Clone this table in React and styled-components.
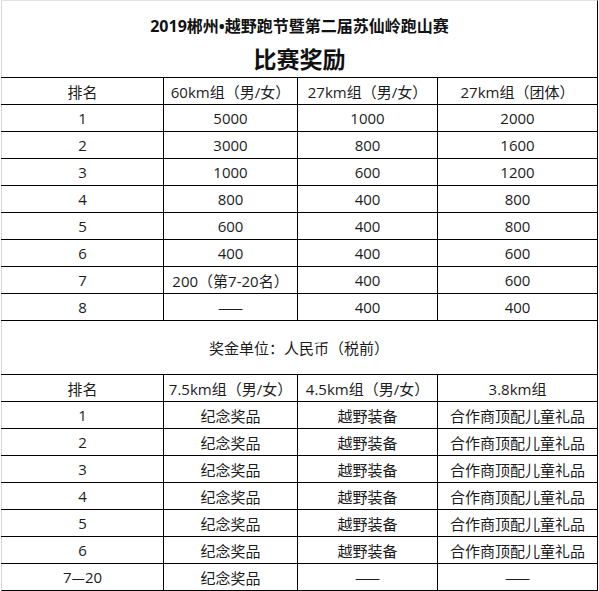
import styled, { createGlobalStyle } from "styled-components"

const GlobalStyle = createGlobalStyle`
body {
    margin: 0;
    background: #fff;
    font-family: "Open Sans", "Noto Sans CJK SC", sans-serif;
    color: #1c1c1c;
}
`

const COLS = "161px 134px 140px 160px"

const Dash = styled.span`
font-family: "Noto Sans CJK SC", sans-serif;
`

const cashPrizes = [
    ["1", "5000", "1000", "2000"],
    ["2", "3000", "800", "1600"],
    ["3", "1000", "600", "1200"],
    ["4", "800", "400", "800"],
    ["5", "600", "400", "800"],
    ["6", "400", "400", "600"],
    ["7", "200（第7-20名）", "400", "600"],
    ["8", <Dash>——</Dash>, "400", "400"],
]

const giftPrizes = [
    ["1", "纪念奖品", "越野装备", "合作商顶配儿童礼品"],
    ["2", "纪念奖品", "越野装备", "合作商顶配儿童礼品"],
    ["3", "纪念奖品", "越野装备", "合作商顶配儿童礼品"],
    ["4", "纪念奖品", "越野装备", "合作商顶配儿童礼品"],
    ["5", "纪念奖品", "越野装备", "合作商顶配儿童礼品"],
    ["6", "纪念奖品", "越野装备", "合作商顶配儿童礼品"],
    [<>7<Dash>—</Dash>20</>, "纪念奖品", <Dash>——</Dash>, <Dash>——</Dash>],
]

const PrizeRows = ({ head, rows }) => (
    <>
        <Row>
            {head.map((h, i) => <Cell key={i}>{h}</Cell>)}
        </Row>
        {rows.map((r, n) => (
            <Row key={n}>
                {r.map((c, i) => <Cell key={i}>{c}</Cell>)}
            </Row>
        ))}
    </>
)

export default function App() {
    return (
        <>
            <GlobalStyle />
            <Page>
                <Sheet>
                    <Header>
                        <Title>2019郴州•越野跑节暨第二届苏仙岭跑山赛</Title>
                        <BigTitle>比赛奖励</BigTitle>
                    </Header>
                    <PrizeRows
                        head={["排名", "60km组（男/女）", "27km组（男/女）", "27km组（团体）"]}
                        rows={cashPrizes}
                    />
                    <Note>奖金单位：人民币（税前）</Note>
                    <PrizeRows
                        head={["排名", "7.5km组（男/女）", "4.5km组（男/女）", "3.8km组"]}
                        rows={giftPrizes}
                    />
                </Sheet>
            </Page>
        </>
    )
}

const Page = styled.div`
padding-left: 1px;
width: 599px;
height: 591px;
box-sizing: border-box;
overflow: hidden;
`
const Sheet = styled.div`
width: 597px;
box-sizing: border-box;
border-top: 1px solid #e2e2e2;
border-left: 1px solid #d6d6d6;
border-right: 1px solid #000;
border-bottom: 1px solid #000;
`
const Header = styled.div`
height: 76px;
display: flex;
flex-direction: column;
align-items: center;
`
const Title = styled.div`
margin-top: 13px;
font-size: 16px;
line-height: 24px;
font-weight: bold;
color: #111;
`
const BigTitle = styled.div`
margin-top: 7px;
font-size: 23px;
line-height: 28px;
font-weight: bold;
color: #111;
`
const Row = styled.div`
display: grid;
grid-template-columns: ${COLS};
height: 27px;
box-sizing: border-box;
border-top: 1px solid #000;
margin-left: -1px;
padding-left: 1px;
`
const Cell = styled.div`
display: flex;
align-items: center;
justify-content: center;
box-sizing: border-box;
font-size: 15px;
white-space: nowrap;
& + & {
    border-left: 1px solid #000;
}
`
const Note = styled.div`
height: 54px;
box-sizing: border-box;
border-top: 1px solid #000;
margin-left: -1px;
display: flex;
align-items: center;
justify-content: center;
font-size: 15px;
`
